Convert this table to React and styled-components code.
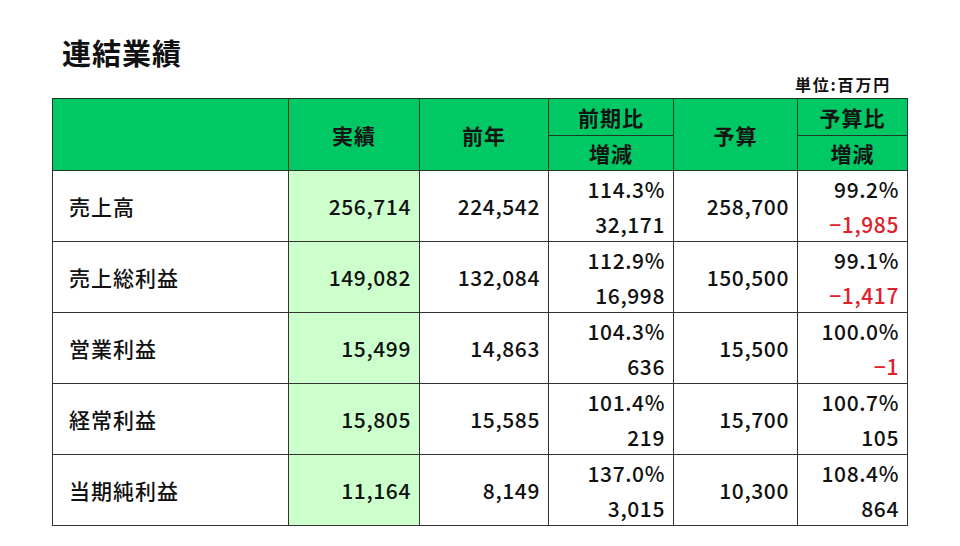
import React from 'react';
import styled, { createGlobalStyle } from 'styled-components';

const GlobalStyle = createGlobalStyle`
  html, body {
    margin: 0;
    padding: 0;
    background: #ffffff;
  }
  body {
    font-family: "Noto Sans CJK JP", "Liberation Sans", sans-serif;
    color: #111;
  }
`;

const Page = styled.div`
  width: 960px;
  height: 546px;
  padding: 37px 0 0 52px;
  box-sizing: border-box;
  display: flex;
  flex-direction: column;
`;

const Title = styled.h1`
  margin: 0 0 0 10px;
  font-size: 29px;
  line-height: 30px;
  font-weight: 700;
  letter-spacing: 1px;
`;

const Unit = styled.div`
  width: 855px;
  margin-top: 8px;
  padding-right: 16px;
  box-sizing: border-box;
  text-align: right;
  font-size: 16px;
  line-height: 18px;
  font-weight: 700;
  letter-spacing: 1.8px;
`;

const Table = styled.table`
  margin-top: 5px;
  width: 855px;
  border-collapse: collapse;
  table-layout: fixed;
  border: 1.5px solid #222;
`;

const Head = styled.th`
  background: #00c864;
  border: 1px solid #1d3b22;
  font-size: 21px;
  font-weight: 700;
  letter-spacing: 1px;
  color: #141414;
  text-align: center;
  padding: 0;
  height: ${({ $h }) => $h}px;
`;

const Cell = styled.td`
  border: 1px solid #333;
  ${({ $top }) => $top && 'border-bottom: none;'}
  ${({ $bottom }) => $bottom && 'border-top: none;'}
  background: ${({ $hl }) => ($hl ? '#ccffcc' : '#ffffff')};
  color: ${({ $neg }) => ($neg ? '#e0202a' : '#111')};
  font-size: 21px;
  font-weight: 500;
  letter-spacing: ${({ $label }) => ($label ? 1 : 0.6)}px;
  text-align: ${({ $label }) => ($label ? 'left' : 'right')};
  padding: ${({ $label }) => ($label ? '0 0 0 16px' : '0 8px 0 0')};
  height: ${({ $h }) => $h}px;
  white-space: nowrap;
`;

const rows = [
  { label: '売上高', act: '256,714', prev: '224,542', yoyR: '114.3%', yoyD: '32,171', bud: '258,700', budR: '99.2%', budD: '−1,985' },
  { label: '売上総利益', act: '149,082', prev: '132,084', yoyR: '112.9%', yoyD: '16,998', bud: '150,500', budR: '99.1%', budD: '−1,417' },
  { label: '営業利益', act: '15,499', prev: '14,863', yoyR: '104.3%', yoyD: '636', bud: '15,500', budR: '100.0%', budD: '−1' },
  { label: '経常利益', act: '15,805', prev: '15,585', yoyR: '101.4%', yoyD: '219', bud: '15,700', budR: '100.7%', budD: '105' },
  { label: '当期純利益', act: '11,164', prev: '8,149', yoyR: '137.0%', yoyD: '3,015', bud: '10,300', budR: '108.4%', budD: '864' },
];

const widths = [236, 131, 129, 125, 124, 110];

export default function App() {
  return (
    <>
      <GlobalStyle />
      <Page>
        <Title>連結業績</Title>
        <Unit>単位:百万円</Unit>
        <Table>
          <colgroup>
            {widths.map((w, i) => (
              <col key={i} style={{ width: w }} />
            ))}
          </colgroup>
          <thead>
            <tr>
              <Head rowSpan={2} $h={36} />
              <Head rowSpan={2} $h={36}>実績</Head>
              <Head rowSpan={2} $h={36}>前年</Head>
              <Head $h={36}>前期比</Head>
              <Head rowSpan={2} $h={36}>予算</Head>
              <Head $h={36}>予算比</Head>
            </tr>
            <tr>
              <Head $h={34}>増減</Head>
              <Head $h={34}>増減</Head>
            </tr>
          </thead>
          <tbody>
            {rows.map((r) => (
              <React.Fragment key={r.label}>
                <tr>
                  <Cell rowSpan={2} $label $h={35}>{r.label}</Cell>
                  <Cell rowSpan={2} $hl $h={35}>{r.act}</Cell>
                  <Cell rowSpan={2} $h={35}>{r.prev}</Cell>
                  <Cell $top $h={35}>{r.yoyR}</Cell>
                  <Cell rowSpan={2} $h={35}>{r.bud}</Cell>
                  <Cell $top $h={35}>{r.budR}</Cell>
                </tr>
                <tr>
                  <Cell $bottom $h={35}>{r.yoyD}</Cell>
                  <Cell $bottom $neg={r.budD.startsWith('−')} $h={35}>{r.budD}</Cell>
                </tr>
              </React.Fragment>
            ))}
          </tbody>
        </Table>
      </Page>
    </>
  );
}
